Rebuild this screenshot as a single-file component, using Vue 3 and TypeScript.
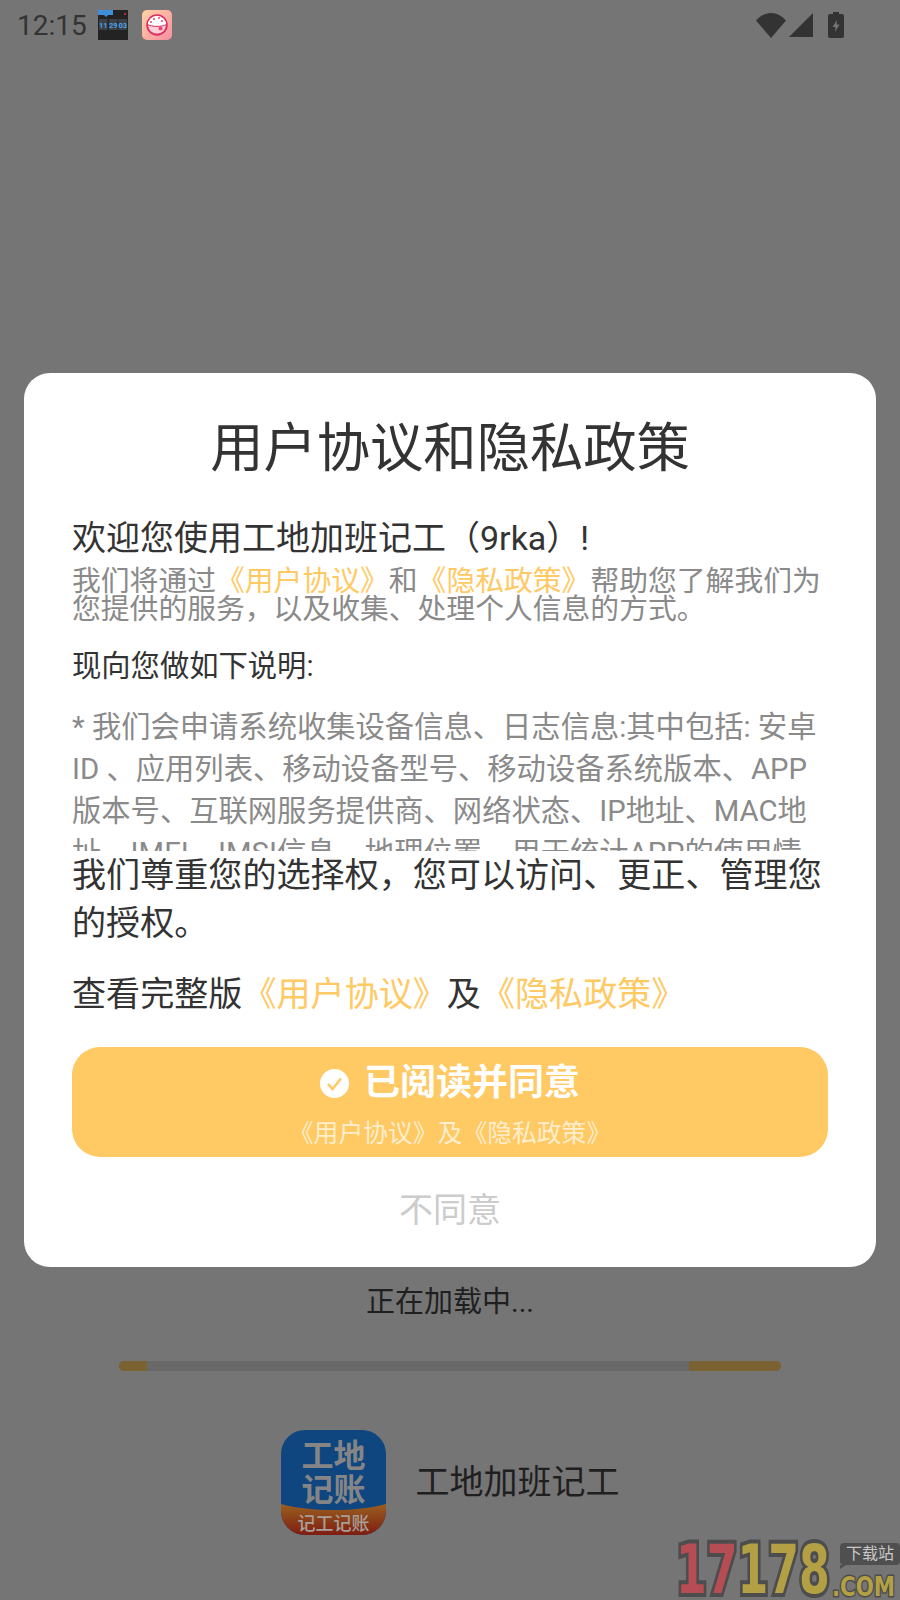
<script setup lang="ts">
const intro = '我们将通过'
const details =
  '* 我们会申请系统收集设备信息、日志信息:其中包括: 安卓ID 、应用列表、移动设备型号、移动设备系统版本、APP版本号、互联网服务提供商、网络状态、IP地址、MAC地址、IMEI、IMSI信息、地理位置、用于统计APP的使用情况。'
</script>

<template>
  <div class="page">
    <header class="status">
      <span class="time">12:15</span>
      <svg class="app-icon" viewBox="0 0 30 30">
        <rect width="30" height="30" fill="#232323" />
        <path d="M0 0h15v5H10l-2 2-2-2H0z" fill="#3f8fd8" />
        <rect x="26" y="3" width="2" height="2" fill="#c92a2a" />
        <g fill="#3c4146">
          <rect x="1" y="9" width="8.5" height="11" />
          <rect x="11" y="9" width="8.5" height="11" />
          <rect x="20.5" y="9" width="8.5" height="11" />
        </g>
        <g class="clock-text">
          <text x="5.200" y="17.500">11</text>
          <text x="15.200" y="17.500">29</text>
          <text x="24.800" y="17.500">03</text>
        </g>
      </svg>
      <svg class="app-icon rice" viewBox="0 0 30 30">
        <defs>
          <linearGradient id="riceBg" x1="0" y1="0" x2="1" y2="1">
            <stop offset="0" stop-color="#ffd2a6" />
            <stop offset="1" stop-color="#f78fa0" />
          </linearGradient>
        </defs>
        <rect width="30" height="30" rx="5" fill="url(#riceBg)" />
        <path d="M5 15a10 10 0 0 1 20 0 10 10 0 0 1-20 0z" fill="#fff" stroke="#d9285c" stroke-width="1.400" />
        <path d="M5.500 14.500c4 2.500 15 2.500 19 0-.5 6-4.500 9.500-9.500 9.500s-9-3.500-9.500-9.500z" fill="#fbd0d6" stroke="#d9285c" stroke-width="1" />
        <g fill="#e8456f">
          <circle cx="12" cy="9" r="1" />
          <circle cx="17" cy="8" r="1" />
          <circle cx="20" cy="11" r="1" />
          <circle cx="9" cy="12" r="1" />
          <circle cx="18.500" cy="18.500" r="2" />
        </g>
      </svg>
      <div class="sys-icons">
        <svg width="30" height="25" viewBox="0 0 30 25">
          <path d="M15 25 0 7.500C4 3 9.200 0 15 0s11 3 15 7.500z" fill="#333" />
        </svg>
        <svg width="24" height="24" viewBox="0 0 24 24">
          <path d="M24 0v24H0z" fill="#333" />
        </svg>
        <svg class="battery" width="16" height="26" viewBox="0 0 16 26">
          <path d="M5 0h6v2h3a2 2 0 0 1 2 2v20a2 2 0 0 1-2 2H2a2 2 0 0 1-2-2V4a2 2 0 0 1 2-2h3z" fill="#333" />
          <path d="M9 8 4.500 15H7.500L7 20l4.500-7.500H8.500z" fill="#757575" />
        </svg>
      </div>
    </header>

    <section class="loader">
      <p class="loading-text">正在加载中...</p>
      <div class="progress">
        <span class="progress-a"></span>
        <span class="progress-b"></span>
      </div>
      <div class="brand">
        <svg class="logo" viewBox="0 0 105 105">
          <defs>
            <linearGradient id="band" x1="0" y1="0" x2="0" y2="1">
              <stop offset="0" stop-color="#99601f" />
              <stop offset="1" stop-color="#7e1c12" />
            </linearGradient>
          </defs>
          <rect width="105" height="105" rx="24" fill="#0f4680" />
          <path d="M0 74c30 8 75 8 105 0v7a24 24 0 0 1-24 24H24A24 24 0 0 1 0 81z" fill="url(#band)" />
          <g class="logo-big">
            <text x="52.500" y="37">工地</text>
            <text x="52.500" y="71">记账</text>
          </g>
          <text class="logo-small" x="52.500" y="100">记工记账</text>
        </svg>
        <span class="brand-name">工地加班记工</span>
      </div>
    </section>

    <div class="watermark">
      <span class="digits"><i class="red">17</i><i class="yellow">178</i></span>
      <span class="bubble">下载站</span>
      <span class="com">.COM</span>
    </div>

    <div class="dialog">
      <h1 class="title">用户协议和隐私政策</h1>
      <p class="welcome">欢迎您使用工地加班记工（9rka）!</p>
      <p class="intro">{{ intro }}<a>《用户协议》</a>和<a>《隐私政策》</a>帮助您了解我们为您提供的服务，以及收集、处理个人信息的方式。</p>
      <p class="lead">现向您做如下说明:</p>
      <div class="scroll">{{ details }}</div>
      <p class="respect">我们尊重您的选择权，您可以访问、更正、管理您的授权。</p>
      <p class="full">查看完整版<a>《用户协议》</a>及<a>《隐私政策》</a></p>
      <button class="agree" type="button">
        <span class="agree-main">
          <svg width="29" height="29" viewBox="0 0 29 29">
            <circle cx="14.500" cy="14.500" r="14.500" fill="#fff" />
            <path d="M8 15l4.500 5L21 9.500" fill="none" stroke="#ffc963" stroke-width="2.600" />
          </svg>
          已阅读并同意
        </span>
        <span class="agree-sub">《用户协议》及《隐私政策》</span>
      </button>
      <button class="refuse" type="button">不同意</button>
    </div>
  </div>
</template>

<style>
body {
  margin: 0;
  background: #757575;
}
</style>

<style scoped>
.page {
  position: relative;
  width: 900px;
  height: 1600px;
  overflow: hidden;
  display: flex;
  flex-direction: column;
  background: #757575;
  font-family: Roboto, "Noto Sans CJK SC", sans-serif;
}
p,
h1 {
  margin: 0;
}
.status {
  height: 50px;
  display: flex;
  align-items: center;
  padding: 0 56px 0 17px;
  flex-shrink: 0;
}
.time {
  width: 81px;
  font-size: 28px;
  color: #333;
}
.app-icon {
  width: 30px;
  height: 30px;
  margin-right: 14px;
}
.clock-text text {
  font-size: 7.500px;
  font-weight: 700;
  fill: #4aa3e8;
  text-anchor: middle;
}
.sys-icons {
  margin-left: auto;
  display: flex;
  align-items: center;
  gap: 3px;
}
.battery {
  margin-left: 12px;
}
.loader {
  margin-top: auto;
  padding-bottom: 65px;
  display: flex;
  flex-direction: column;
  align-items: center;
}
.loading-text {
  font-size: 29px;
  line-height: 40px;
  color: #1f1f1f;
}
.progress {
  width: 662px;
  height: 10px;
  margin-top: 39px;
  border-radius: 5px;
  overflow: hidden;
  background: #696969;
  display: flex;
  justify-content: space-between;
}
.progress-a {
  width: 28px;
  background: #7a6232;
}
.progress-b {
  width: 92px;
  background: #7a6232;
}
.brand {
  margin-top: 59px;
  display: flex;
  align-items: center;
  gap: 30px;
}
.logo {
  width: 105px;
  height: 105px;
  display: block;
}
.logo-big text {
  font-size: 32px;
  font-weight: 700;
  fill: #858585;
  text-anchor: middle;
}
.logo-small {
  font-size: 18px;
  font-weight: 500;
  fill: #a8a098;
  text-anchor: middle;
}
.brand-name {
  margin-bottom: 7px;
  font-size: 34px;
  color: #1f1f1f;
}
.watermark {
  position: absolute;
  left: 678px;
  top: 1536px;
  width: 222px;
  height: 64px;
}
.digits {
  position: absolute;
  left: -2px;
  top: 0;
  font-family: "DejaVu Sans", sans-serif;
  font-size: 68px;
  line-height: 68px;
  font-weight: 700;
  transform: scaleX(0.65);
  transform-origin: left top;
  white-space: nowrap;
}
.digits i {
  font-style: normal;
  -webkit-text-stroke: 8px #4d4d4d;
  paint-order: stroke fill;
}
.red {
  color: #b64c54;
}
.yellow {
  color: #b3a045;
}
.bubble {
  position: absolute;
  left: 162px;
  top: 7px;
  width: 60px;
  height: 22px;
  border-radius: 4px;
  background: #4f4f4f;
  color: #c8c8c8;
  font-size: 16px;
  line-height: 22px;
  text-align: center;
}
.bubble::after {
  content: "";
  position: absolute;
  left: 0;
  bottom: -4px;
  border-top: 4px solid #4f4f4f;
  border-right: 6px solid transparent;
}
.com {
  position: absolute;
  left: 154px;
  top: 37px;
  font-family: "DejaVu Sans", sans-serif;
  font-size: 26px;
  line-height: 28px;
  font-weight: 700;
  color: #b3a045;
  -webkit-text-stroke: 3px #4d4d4d;
  paint-order: stroke fill;
  transform: scaleX(0.82);
  transform-origin: left top;
}
.dialog {
  position: absolute;
  left: 24px;
  top: 373px;
  width: 852px;
  box-sizing: border-box;
  padding: 46px 48px 32px;
  background: #fff;
  border-radius: 26px;
  color: #333;
}
.title {
  font-size: 53.300px;
  line-height: 60px;
  font-weight: 400;
  text-align: center;
}
.welcome {
  margin-top: 39px;
  font-size: 34px;
  line-height: 40px;
}
.intro {
  margin-top: 9px;
  font-size: 28.800px;
  line-height: 28px;
  color: #8a8a8a;
}
a {
  color: #ffc963;
}
.lead {
  margin-top: 23px;
  font-size: 29.300px;
  line-height: 40px;
}
.scroll {
  margin-top: 20px;
  height: 145px;
  overflow: hidden;
  font-size: 29.300px;
  line-height: 42px;
  color: #8a8a8a;
}
.respect {
  font-size: 34.100px;
  line-height: 48px;
}
.full {
  margin-top: 23px;
  font-size: 34.100px;
  line-height: 48px;
}
.agree {
  display: flex;
  flex-direction: column;
  align-items: center;
  width: 100%;
  height: 110px;
  margin-top: 29px;
  padding: 12px 0 0;
  border: none;
  border-radius: 28px;
  background: #ffc963;
  color: #fff;
  font-family: inherit;
}
.agree-main {
  display: flex;
  align-items: center;
  gap: 15px;
  font-size: 36px;
  line-height: 48px;
  font-weight: 700;
}
.agree-sub {
  margin-top: 11px;
  font-size: 24.800px;
  line-height: 32px;
  color: rgba(255, 255, 255, 0.7);
}
.refuse {
  display: block;
  width: 100%;
  height: 50px;
  margin-top: 28px;
  padding: 0;
  border: none;
  background: none;
  color: #cccccc;
  font-family: inherit;
  font-size: 34px;
  line-height: 50px;
}
</style>
